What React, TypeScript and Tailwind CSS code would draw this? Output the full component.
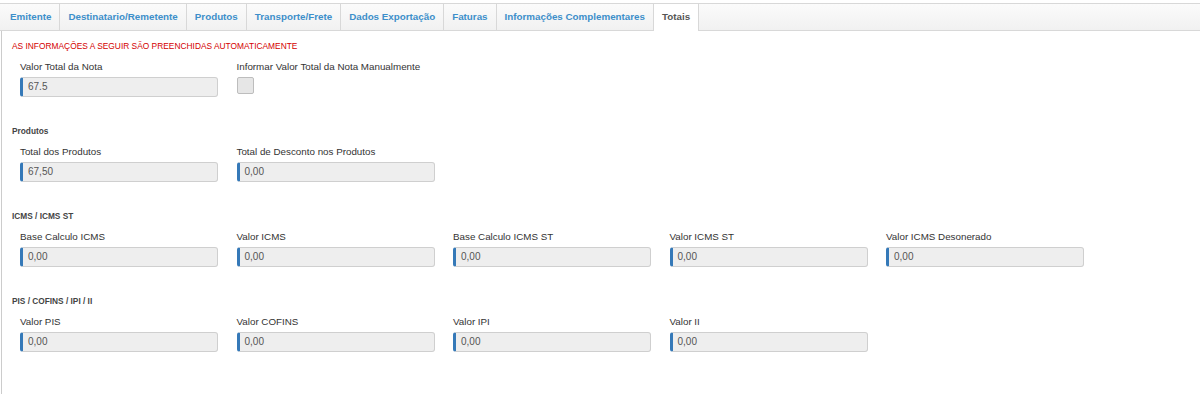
import { JSX } from 'react'

const tabs = [
  'Emitente',
  'Destinatario/Remetente',
  'Produtos',
  'Transporte/Frete',
  'Dados Exportação',
  'Faturas',
  'Informações Complementares',
  'Totais',
]

type Field = { label: string; value: string }

function ReadOnlyInput({ value }: { value: string }): JSX.Element {
  return (
    <div className="h-[20px] w-[198px] rounded-[3px] border border-[#cfcfcf] border-l-[3px] border-l-[#3579b8] bg-[#eeeeee] pl-[5px] text-[10px] leading-[18px] text-[#555]">
      {value}
    </div>
  )
}

function FieldBox({ label, value }: Field): JSX.Element {
  return (
    <div className="w-[216.5px]">
      <div className="mb-[4px] h-[13px] text-[9.8px] leading-[13px] text-[#333]">{label}</div>
      <ReadOnlyInput value={value} />
    </div>
  )
}

function Section({ title, fields }: { title: string; fields: Field[] }): JSX.Element {
  return (
    <div className="mb-[28px]">
      <div className="h-[12px] text-[8.3px] font-bold leading-[12px] text-[#444]">{title}</div>
      <div className="mt-[8px] flex pl-[8px]">
        {fields.map((f) => (
          <FieldBox key={f.label} label={f.label} value={f.value} />
        ))}
      </div>
    </div>
  )
}

export default function App(): JSX.Element {
  return (
    <div className="h-[394px] w-[1200px] overflow-hidden bg-white font-['Liberation_Sans',Arial,sans-serif]">
      <div className="mt-[3px] flex h-[28px] border-y border-[#d8d8d8] bg-gradient-to-b from-[#fbfbfb] to-[#f1f1f1] pl-[2px]">
        {tabs.map((t) => {
          const active = t === 'Totais'
          return (
            <div
              key={t}
              className={
                active
                  ? 'relative -mb-px flex items-center border-r border-[#d8d8d8] bg-white px-[8px] text-[9.8px] font-bold text-[#555]'
                  : 'flex items-center border-r border-[#d8d8d8] px-[8px] text-[9.8px] font-bold text-[#3d8fca]'
              }
            >
              {t}
            </div>
          )
        })}
      </div>
      <div className="ml-[1px] h-[363px] border-l border-[#cccccc] pl-[10px] pt-[9px]">
        <div className="mb-[28px]">
          <div className="h-[12px] text-[8.4px] leading-[12px] text-[#d40000]">
            AS INFORMAÇÕES A SEGUIR SÃO PREENCHIDAS AUTOMATICAMENTE
          </div>
          <div className="mt-[8px] flex pl-[8px]">
            <FieldBox label="Valor Total da Nota" value="67.5" />
            <div className="w-[216.5px]">
              <div className="mb-[4px] h-[13px] text-[9.8px] leading-[13px] text-[#333]">
                Informar Valor Total da Nota Manualmente
              </div>
              <div className="mt-[2px] h-[17px] w-[17px] rounded-[2px] border border-[#bdbdbd] bg-[#e6e6e6]" />
            </div>
          </div>
        </div>
        <Section
          title="Produtos"
          fields={[
            { label: 'Total dos Produtos', value: '67,50' },
            { label: 'Total de Desconto nos Produtos', value: '0,00' },
          ]}
        />
        <Section
          title="ICMS / ICMS ST"
          fields={[
            { label: 'Base Calculo ICMS', value: '0,00' },
            { label: 'Valor ICMS', value: '0,00' },
            { label: 'Base Calculo ICMS ST', value: '0,00' },
            { label: 'Valor ICMS ST', value: '0,00' },
            { label: 'Valor ICMS Desonerado', value: '0,00' },
          ]}
        />
        <Section
          title="PIS / COFINS / IPI / II"
          fields={[
            { label: 'Valor PIS', value: '0,00' },
            { label: 'Valor COFINS', value: '0,00' },
            { label: 'Valor IPI', value: '0,00' },
            { label: 'Valor II', value: '0,00' },
          ]}
        />
      </div>
    </div>
  )
}
